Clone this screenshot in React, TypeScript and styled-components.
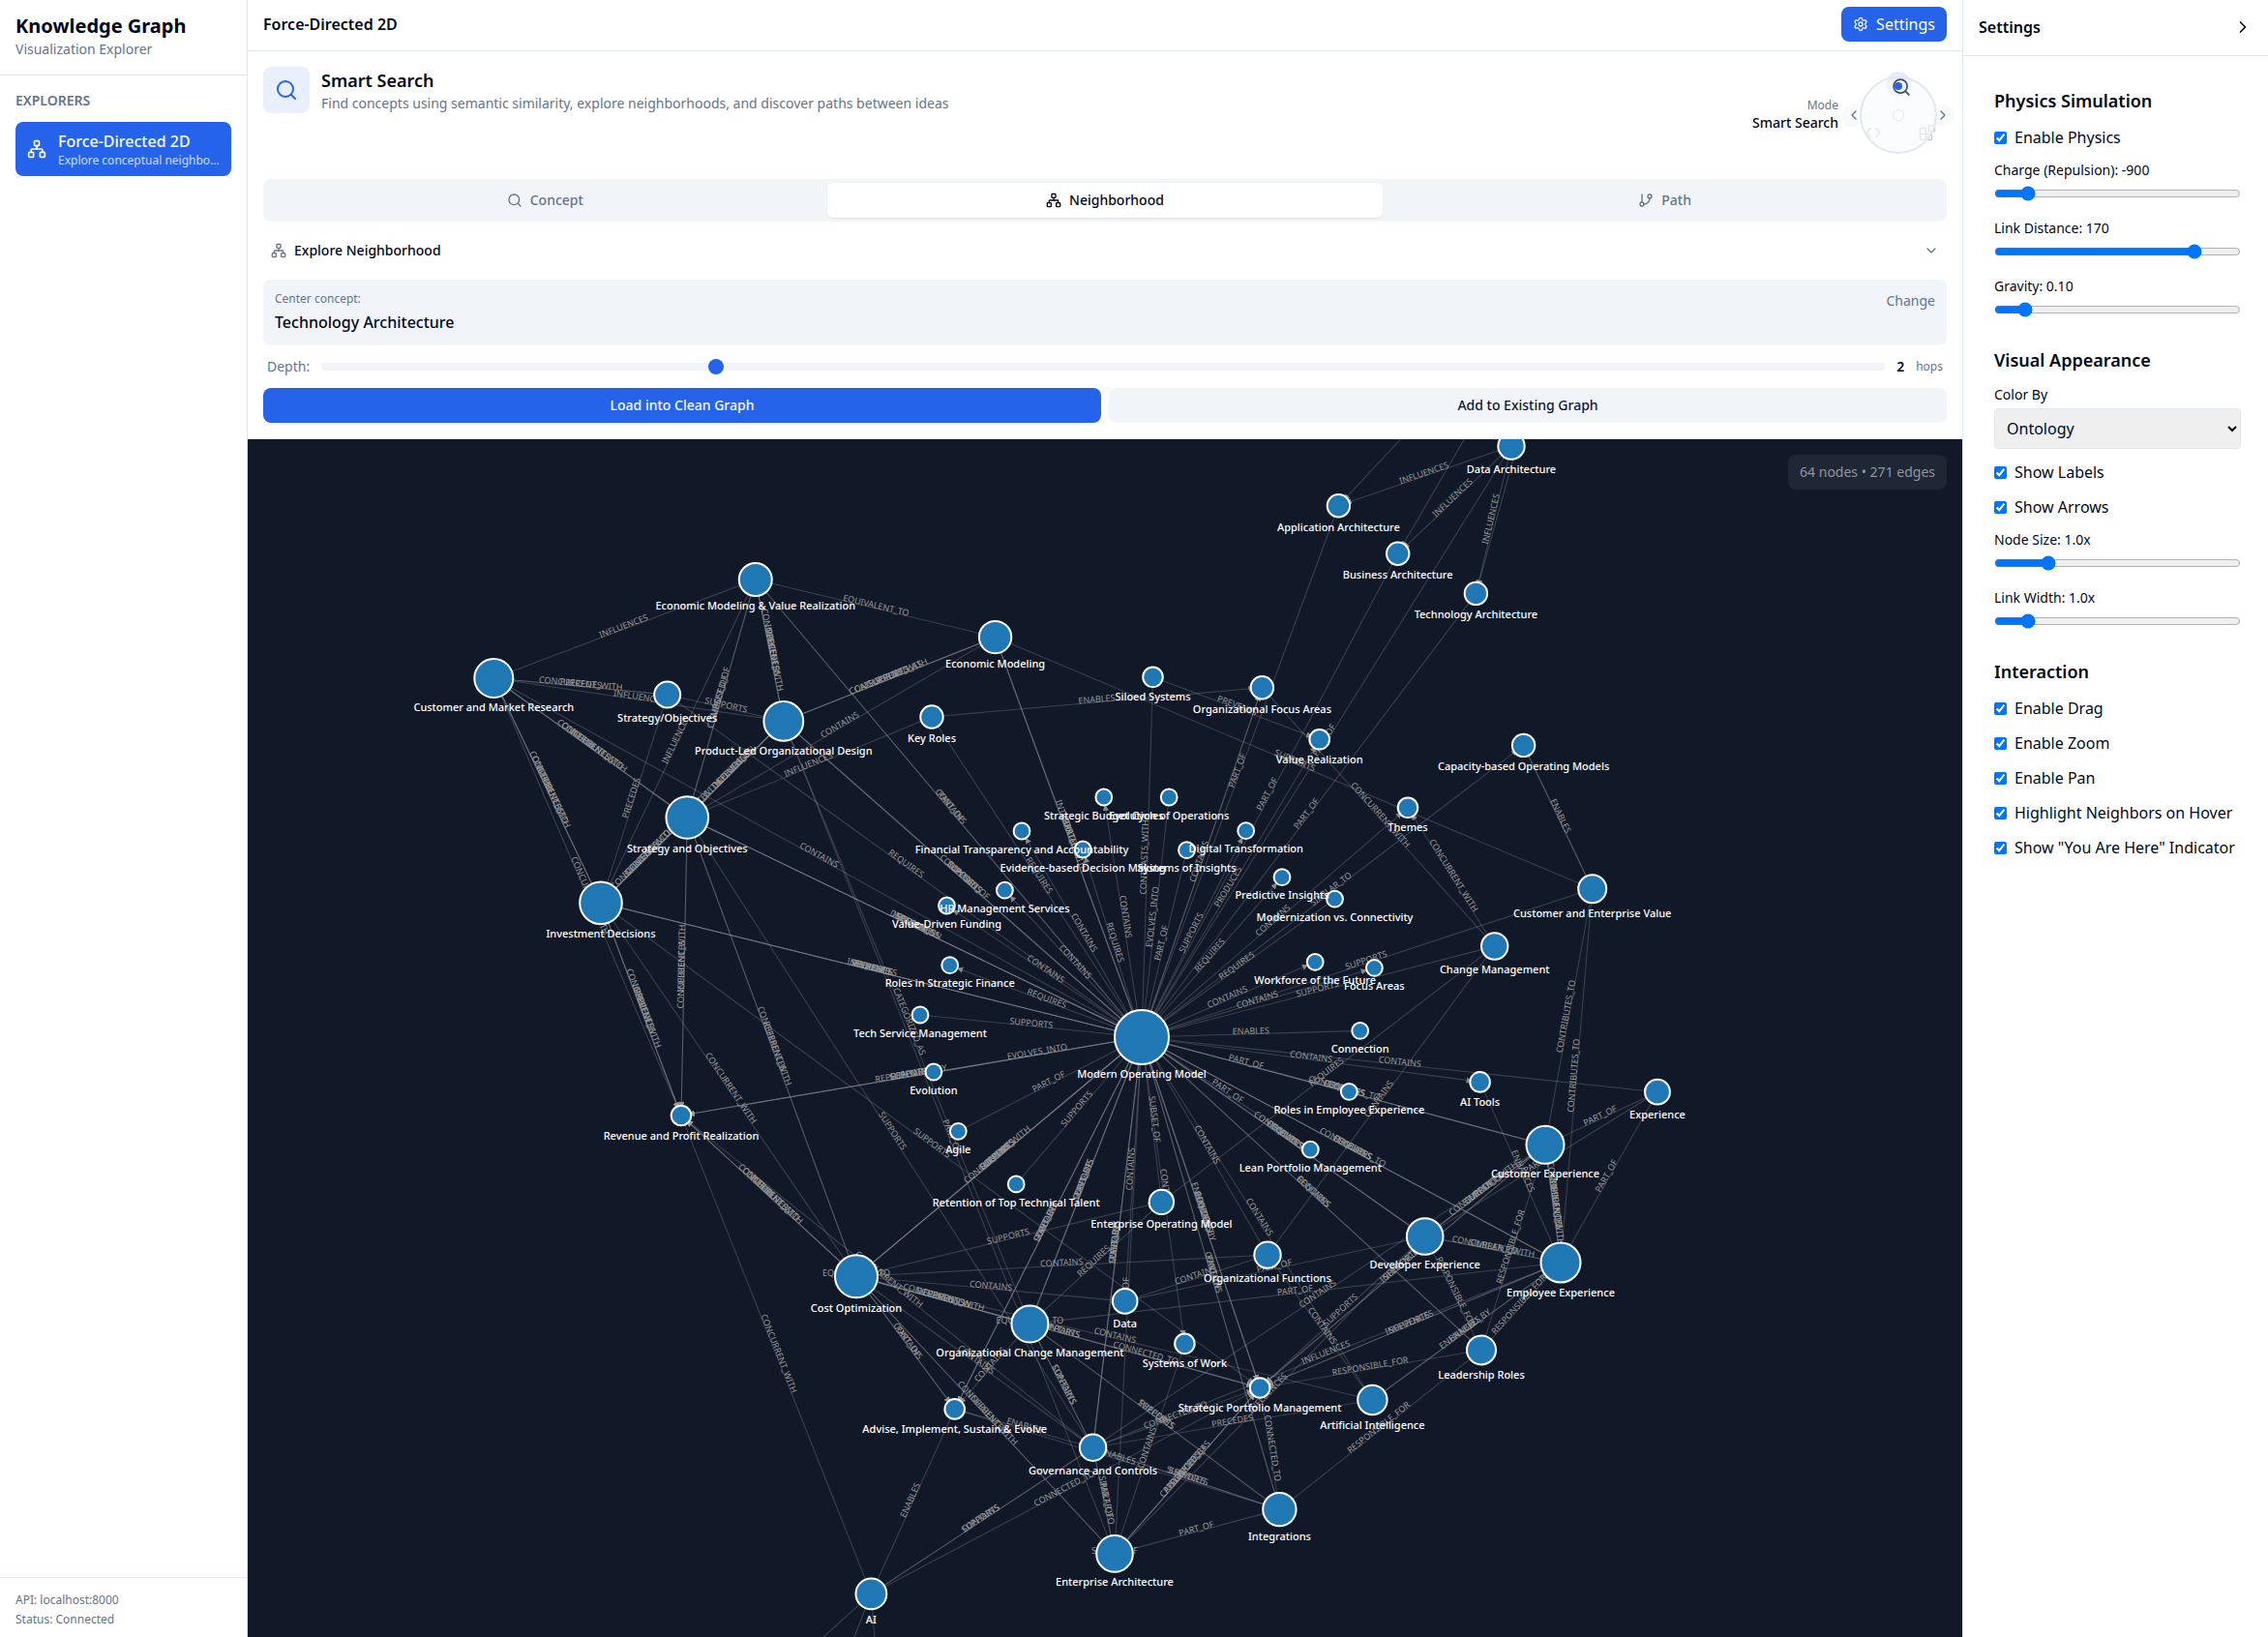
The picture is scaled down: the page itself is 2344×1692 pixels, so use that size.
import React, { useState } from "react";
import styled, { createGlobalStyle, css } from "styled-components";
import {
  Blocks,
  ChevronDown,
  ChevronLeft,
  ChevronRight,
  Code,
  GitBranch,
  Network,
  Search,
  Settings,
} from "lucide-react";

const color = {
  text: "#020817",
  muted: "#64748b",
  border: "#e2e8f0",
  surface: "#f1f5f9",
  primary: "#2563eb",
  onPrimary: "#f8fafc",
  canvas: "#111827",
};

const GlobalStyle = createGlobalStyle`
  *, *::before, *::after { box-sizing: border-box; }
  body {
    margin: 0;
    overflow: hidden;
    background: #fff;
    color: ${color.text};
    font-family: "Noto Sans", sans-serif;
    font-size: 16px;
    line-height: 24px;
  }
  button, select, input { font: inherit; color: inherit; }
  button { border: 0; background: none; padding: 0; cursor: pointer; }
  h1, h2, h3, p { margin: 0; }
  svg { display: block; flex-shrink: 0; }
`;

/* ---------- page frame ---------- */

const Page = styled.div`
  display: grid;
  grid-template-columns: 256px minmax(0, 1fr) 316px;
  height: 100vh;
`;

const Sidebar = styled.aside`
  display: flex;
  flex-direction: column;
  border-right: 1px solid ${color.border};
`;

const Brand = styled.header`
  padding: 16px;
  height: 78px;
  border-bottom: 1px solid ${color.border};
`;

const BrandName = styled.h1`
  font-size: 20px;
  line-height: 25px;
  margin-top: -2px;
  margin-bottom: 2px;
  font-weight: 700;
`;

const Muted = styled.p<{ $small?: boolean }>`
  font-size: ${(p) => (p.$small ? 12 : 14)}px;
  line-height: ${(p) => (p.$small ? 16 : 20)}px;
  color: ${color.muted};
`;

const Explorers = styled.nav`
  flex: 1;
  padding: 16px;
`;

const NavTitle = styled.h2`
  font-size: 14px;
  line-height: 20px;
  font-weight: 600;
  text-transform: uppercase;
  color: ${color.muted};
  margin-bottom: 12px;
`;

const ExplorerItem = styled.button`
  display: flex;
  align-items: center;
  gap: 12px;
  width: 100%;
  padding: 8px 12px;
  border-radius: 8px;
  background: ${color.primary};
  color: ${color.onPrimary};
  text-align: left;
`;

const ExplorerText = styled.span`
  flex: 1;
  min-width: 0;
`;

const ExplorerName = styled.span`
  display: block;
  font-weight: 500;
  line-height: 24px;
`;

const ExplorerHint = styled.span`
  display: block;
  font-size: 12px;
  line-height: 16px;
  opacity: 0.8;
  overflow: hidden;
  text-overflow: ellipsis;
  white-space: nowrap;
`;

const SidebarFooter = styled.footer`
  display: flex;
  flex-direction: column;
  gap: 4px;
  padding: 15px 16px 10px;
  border-top: 1px solid ${color.border};
`;

const Main = styled.main`
  display: flex;
  flex-direction: column;
  min-width: 0;
  min-height: 0;
`;

const TopBar = styled.header`
  display: flex;
  align-items: center;
  justify-content: space-between;
  height: 53px;
  padding: 0 16px 2px;
  border-bottom: 1px solid ${color.border};
`;

const BarTitle = styled.h2`
  font-size: 16px;
  line-height: 24px;
  font-weight: 600;
`;

const SettingsButton = styled.button`
  display: flex;
  align-items: center;
  gap: 8px;
  height: 36px;
  padding: 0 12px;
  border-radius: 8px;
  background: ${color.primary};
  color: ${color.onPrimary};
`;

/* ---------- search area ---------- */

const SearchArea = styled.section`
  display: flex;
  flex-direction: column;
  padding: 16px;
  border-bottom: 1px solid ${color.border};
`;

const SearchHead = styled.div`
  display: flex;
  justify-content: space-between;
  align-items: flex-start;
  height: 100px;
  margin-bottom: 16px;
`;

const Intro = styled.div`
  display: flex;
  gap: 12px;
`;

const IntroIcon = styled.div`
  display: grid;
  place-items: center;
  width: 48px;
  height: 48px;
  border-radius: 8px;
  background: #e9effd;
  color: ${color.primary};
`;

const IntroTitle = styled.h2`
  font-size: 18px;
  line-height: 28px;
  font-weight: 600;
`;

const ModePicker = styled.div`
  display: flex;
  align-items: center;
  gap: 12px;
`;

const ModeText = styled.div`
  text-align: right;
`;

const ModeName = styled.p`
  font-size: 14px;
  line-height: 20px;
  font-weight: 500;
`;

const Dial = styled.div`
  position: relative;
  width: 100px;
  height: 100px;
`;

const DialArrow = styled.button<{ $side: "left" | "right" }>`
  position: absolute;
  top: 38px;
  ${(p) => p.$side}: -8px;
  display: grid;
  place-items: center;
  width: 24px;
  height: 24px;
  border-radius: 50%;
  background: #f8fafc;
  color: ${color.muted};
`;

const DialHalo = styled.span`
  position: absolute;
  left: 37px;
  top: 5px;
  width: 26px;
  height: 26px;
  border-radius: 50%;
  background: #e4ebfd;
`;

const DialFace = styled.span`
  position: absolute;
  left: 10px;
  top: 10px;
  width: 80px;
  height: 80px;
  border: 2px solid ${color.border};
  border-radius: 50%;
  background: rgba(248, 250, 252, 0.6);
`;

const DialIcon = styled.span<{ $x: number; $y: number; $dim?: boolean }>`
  position: absolute;
  left: ${(p) => p.$x}px;
  top: ${(p) => p.$y}px;
  transform: translate(-50%, -50%);
  color: ${(p) => (p.$dim ? "#c6cad1" : "#475060")};
`;

const DialDot = styled.span<{ $hub?: boolean }>`
  position: absolute;
  left: 50px;
  top: ${(p) => (p.$hub ? 50 : 20)}px;
  width: ${(p) => (p.$hub ? 12 : 8)}px;
  height: ${(p) => (p.$hub ? 12 : 8)}px;
  border-radius: 50%;
  transform: translate(-50%, -50%);
  background: ${(p) => (p.$hub ? "#fff" : color.primary)};
  ${(p) => p.$hub && css`border: 1px solid ${color.border};`}
`;

const Tabs = styled.div`
  display: grid;
  grid-template-columns: repeat(3, 1fr);
  gap: 4px;
  padding: 4px;
  border-radius: 8px;
  background: ${color.surface};
`;

const Tab = styled.button<{ $active: boolean }>`
  display: flex;
  align-items: center;
  justify-content: center;
  gap: 8px;
  height: 36px;
  border-radius: 6px;
  font-size: 14px;
  line-height: 20px;
  font-weight: 500;
  color: ${(p) => (p.$active ? color.text : color.muted)};
  ${(p) =>
    p.$active &&
    css`
      background: #fff;
      box-shadow: 0 1px 2px rgba(0, 0, 0, 0.07);
    `}
`;

const Disclosure = styled.button`
  display: flex;
  align-items: center;
  gap: 8px;
  height: 36px;
  margin: 12px 0;
  padding: 0 8px;
  font-size: 14px;
  line-height: 20px;
  font-weight: 500;
  svg { color: ${color.muted}; }
  svg:last-child { margin-left: auto; }
`;

const ConceptCard = styled.div`
  display: flex;
  justify-content: space-between;
  align-items: flex-start;
  padding: 12px;
  border-radius: 8px;
  background: ${color.surface};
`;

const ConceptName = styled.p`
  margin-top: 4px;
  line-height: 24px;
  font-weight: 500;
`;

const LinkButton = styled.button`
  font-size: 14px;
  line-height: 20px;
  color: ${color.muted};
`;

const DepthRow = styled.label`
  display: flex;
  align-items: center;
  gap: 12px;
  height: 20px;
  margin: 12px 0;
  padding: 0 4px;
`;

const DepthValue = styled.span`
  font-size: 14px;
  font-weight: 600;
`;

const DepthSlider = styled.input`
  flex: 1;
  appearance: none;
  height: 8px;
  margin: 0;
  border-radius: 8px;
  background: ${color.surface};
  &::-webkit-slider-thumb {
    appearance: none;
    width: 16px;
    height: 16px;
    border-radius: 50%;
    background: ${color.primary};
  }
`;

const Actions = styled.div`
  display: grid;
  grid-template-columns: 1fr 1fr;
  gap: 8px;
`;

const Action = styled.button<{ $primary?: boolean }>`
  height: 36px;
  border-radius: 8px;
  font-size: 14px;
  font-weight: 500;
  background: ${(p) => (p.$primary ? color.primary : color.surface)};
  color: ${(p) => (p.$primary ? color.onPrimary : "#0f172a")};
`;

/* ---------- graph ---------- */

const Canvas = styled.section`
  position: relative;
  flex: 1;
  min-height: 0;
  overflow: hidden;
  background: ${color.canvas};
`;

const GraphSvg = styled.svg`
  width: 1772px;
  height: 1238px;
  font-family: "Noto Sans", sans-serif;
`;

const Stats = styled.div`
  position: absolute;
  top: 16px;
  right: 16px;
  padding: 8px 12px;
  border-radius: 8px;
  background: #1f2735;
  color: #8f96a3;
  font-size: 14px;
  line-height: 20px;
`;

const EdgeLine = styled.line`
  stroke: #979aa6;
  stroke-opacity: 0.3;
  stroke-width: 1.1;
`;

const EdgeText = styled.text`
  fill: #999;
  font-size: 9px;
  text-anchor: middle;
`;

const NodeDot = styled.circle`
  fill: #1f77b4;
  stroke: #fff;
  stroke-width: 2;
`;

const NodeText = styled.text`
  fill: #fff;
  font-size: 11px;
  font-weight: 500;
  text-anchor: middle;
`;

type GraphNode = { x: number; y: number; r: number; label: string };

/* id: [x, y, outer radius, label] */
const nodeTable: Record<string, [number, number, number, string]> = {
  emvr: [780.8, 599, 18, "Economic Modeling & Value Realization"],
  em: [1028.6, 658.6, 17.7, "Economic Modeling"],
  cmr: [510.3, 701, 21, "Customer and Market Research"],
  sobj: [689.7, 718, 14.5, "Strategy/Objectives"],
  plod: [809.8, 745.4, 21.4, "Product-Led Organizational Design"],
  key: [963, 741, 12.7, "Key Roles"],
  so: [710.3, 845, 22.8, "Strategy and Objectives"],
  inv: [621, 933.3, 22.8, "Investment Decisions"],
  rev: [704, 1153, 11.3, "Revenue and Profit Realization"],
  sbc: [1140.8, 824, 9.4, "Strategic Budget Cycles"],
  eop: [1208.2, 824, 9.4, "Evolution of Operations"],
  fta: [1056, 859, 9.4, "Financial Transparency and Accountability"],
  edm: [1119.2, 878, 9.4, "Evidence-based Decision Making"],
  soi: [1226.5, 878.7, 9.4, "Systems of Insights"],
  dt: [1287.7, 858.7, 9.4, "Digital Transformation"],
  pi: [1325, 906.7, 9.4, "Predictive Insights"],
  mvc: [1379.5, 929.2, 9.4, "Modernization vs. Connectivity"],
  themes: [1455, 834.8, 11.3, "Themes"],
  hr: [1038.4, 920.2, 9.4, "HR Management Services"],
  vdf: [978.5, 936, 9.4, "Value-Driven Funding"],
  rsf: [981.7, 997.7, 9.4, "Roles in Strategic Finance"],
  wof: [1359.2, 994.3, 9.4, "Workforce of the Future"],
  fa: [1420.4, 1000.4, 9.4, "Focus Areas"],
  conn: [1405.7, 1065.4, 9.4, "Connection"],
  tsm: [951, 1049, 9.4, "Tech Service Management"],
  evo: [964.9, 1108, 9.4, "Evolution"],
  agile: [990.3, 1169.3, 9.4, "Agile"],
  ret: [1050.2, 1223.9, 9.4, "Retention of Top Technical Talent"],
  eom: [1200.4, 1242.4, 13.7, "Enterprise Operating Model"],
  mom: [1180, 1072, 29, "Modern Operating Model"],
  ree: [1394.3, 1128.4, 9.4, "Roles in Employee Experience"],
  lean: [1354.3, 1188.2, 9.4, "Lean Portfolio Management"],
  ait: [1529.6, 1118.4, 11.3, "AI Tools"],
  darch: [1562, 461, 14.7, "Data Architecture"],
  aarch: [1383.4, 522.8, 12.7, "Application Architecture"],
  barch: [1444.7, 572.3, 12.7, "Business Architecture"],
  tarch: [1525.4, 613.4, 12.7, "Technology Architecture"],
  silo: [1191.5, 699.8, 11.3, "Siloed Systems"],
  ofa: [1304.4, 710.7, 12.7, "Organizational Focus Areas"],
  vr: [1363.7, 764.3, 11.3, "Value Realization"],
  cap: [1574.6, 770.4, 12.7, "Capacity-based Operating Models"],
  cev: [1645.7, 918.8, 15.5, "Customer and Enterprise Value"],
  chg: [1544.7, 978, 14.7, "Change Management"],
  exp: [1713, 1128.7, 13.9, "Experience"],
  cx: [1597, 1183.3, 20.5, "Customer Experience"],
  dx: [1472.7, 1278, 19.8, "Developer Experience"],
  ex: [1613, 1305, 21.5, "Employee Experience"],
  lead: [1531, 1395.4, 16, "Leadership Roles"],
  of: [1310, 1297.1, 14.7, "Organizational Functions"],
  cost: [885, 1319.3, 23, "Cost Optimization"],
  ocm: [1064.4, 1368.4, 20, "Organizational Change Management"],
  data: [1162.7, 1344.9, 13.8, "Data"],
  sow: [1224.4, 1388.8, 11.3, "Systems of Work"],
  spm: [1302.1, 1434.5, 11.3, "Strategic Portfolio Management"],
  adv: [986.7, 1456.4, 11.3, "Advise, Implement, Sustain & Evolve"],
  gov: [1129.6, 1496.2, 14.7, "Governance and Controls"],
  ea: [1152, 1605.9, 19.8, "Enterprise Architecture"],
  ai: [900.4, 1647.4, 16.9, "AI"],
  int: [1322.4, 1560.1, 18.2, "Integrations"],
  art: [1418.4, 1447, 16.2, "Artificial Intelligence"],
  offTop: [1621.8, 266.8, 14, ""],
  offA: [794, 1743.5, 12, ""],
  offB: [862, 1745, 12, ""],
  offC: [908, 1745, 12, ""],
};

const nodes: Record<string, GraphNode> = Object.fromEntries(
  Object.entries(nodeTable).map(([id, [x, y, r, label]]) => [id, { x, y, r, label }])
);

/* source target relation,relation,… */
const edgeTable = `
mom sbc CONTAINS
mom edm REQUIRES
mom fta CONTAINS
mom hr CONTAINS
mom vdf CONTAINS
mom rsf REQUIRES
tsm mom SUPPORTS
evo mom EVOLVES_INTO
agile mom PART_OF
ret mom SUPPORTS
eop mom EVOLVES_INTO
soi mom PART_OF
mom dt SUPPORTS
mom pi REQUIRES
mvc mom REQUIRES
mom themes CONTAINS
mom cap SIMILAR_TO
mom vr PRODUCES
tarch mom PART_OF
barch mom PART_OF
aarch mom PART_OF
darch mom PART_OF
mom ofa CONTAINS
silo mom CONTRASTS_WITH
mom ofa
em mom INTEGRATES_WITH,CONTAINS,PART_OF
emvr mom CONTAINS,PART_OF
plod mom COMPOSED_OF,CONTAINS,SUPPORTS
sobj mom REQUIRES
cmr mom CONTAINS
so mom INFLUENCES,SUPPORTS,REQUIRES,DEPENDS_ON
inv mom INFLUENCES,SUPPORTS,REQUIRES,ENABLES
mom rev REPRESENTED_BY,SUPPORTS,CONTAINS
key mom REQUIRES
cost mom CONCURRENT_WITH,CONTAINS,SUPPORTS,REQUIRES
ocm mom SUPPORTS,PART_OF,CONTAINS
mom adv SUPPORTS,CONTAINS,PART_OF
gov mom SUPPORTS,PART_OF,CONTAINS
ea mom PART_OF
mom data CONTAINS
eom mom SUBSET_OF
mom sow CONTAINS
mom spm ENHANCED_BY,CONTAINS,REQUIRES
int mom CONTAINS,PART_OF
mom of CONTAINS
mom art CONTAINS
mom lead REQUIRES,CONTAINS
dx mom CONTRIBUTES_TO,CONTAINS,REQUIRES
lean mom PART_OF
ex mom CONTRIBUTES_TO,CONTAINS,REQUIRES
cx mom CONTRIBUTES_TO,CONTAINS,REQUIRES
ree mom PART_OF
mom ait CONTAINS
mom exp CONTAINS
conn mom ENABLES
mom fa CONTAINS
mom wof CONTAINS
chg mom SUPPORTS
cev mom SUPPORTS
emvr cmr INFLUENCES
emvr em EQUIVALENT_TO
emvr plod CONCURRENT_WITH,PRECEDES,INFLUENCES
emvr so COMPOSED_OF,SUBSET_OF
emvr inv INFLUENCES
em plod CONCURRENT_WITH,CATEGORIZED_AS,SUPPORTS
em so CONTAINS
em cev SUPPORTS
silo vr PREVENTS
key ofa ENABLES
ofa chg CONCURRENT_WITH
chg themes CONCURRENT_WITH
cap cev ENABLES,
cmr plod INFLUENCES
cmr sobj CONCURRENT_WITH,PRECEDES
sobj plod SUPPORTS
sobj inv PRECEDES
cmr so CONCURRENT_WITH,INFLUENCES,CONTRIBUTES_TO
cmr inv CONCURRENT_WITH,CONTRIBUTES_TO,INFLUENCES
cmr rev CONCURRENT_WITH
plod so INFLUENCES,DEPENDS_ON,CONTAINS
plod inv CONCURRENT_WITH,INFLUENCES
so inv CONCURRENT_WITH,INFLUENCES,CONTAINS
key so INFLUENCES
so rev CONCURRENT_WITH,INFLUENCES
inv rev CONCURRENT_WITH,INFLUENCES,PRECEDES
so cost CONCURRENT_WITH,REFERENCES
inv cost CONCURRENT_WITH
inv spm SUPPORTS
so gov SUPPORTS
plod ocm CATEGORIZED_AS
plod ea PART_OF
cost rev CONCURRENT_WITH,CONTRIBUTES_TO,INFLUENCES
rev ai CONCURRENT_WITH
gov rev CONCURRENT_WITH
cost eom SUPPORTS
cost of CONTAINS
cost data CONTAINS
cost ocm CONCURRENT_WITH,CONTAINS,DEPENDS_ON
cost spm CONTAINS,SUPPORTS
eom ocm REQUIRES
cost adv CONTAINS,PART_OF
cost gov CONTAINS
cost ea CONCURRENT_WITH,INFLUENCES
ocm adv CONTAINS
ocm gov CONTAINS,SUPPORTS
ocm spm CONNECTED_TO
cost art CONTAINS
ocm int PRECEDES,SUPPORTS
ocm ex PART_OF
data of CONTAINS
data dx PART_OF
sow ea CONTAINS
gov spm CONNECTED_TO
gov art PRECEDES
ai spm CONNECTED_TO
ea spm CATEGORIZED_AS,SUPPORTS,PRODUCED_BY
spm int CONNECTED_TO
gov int SERVICES,SUPPORTS
adv gov ENABLES
adv int ENABLES
adv ai ENABLES
gov ea SIMILAR_TO,PART_OF
gov ai CONTAINS,SUPPORTS
ea int PART_OF
gov cx CONTAINS
dx spm SUPPORTS
ea dx INFLUENCES
cx spm INFLUENCES,SUPPORTS
ex spm INFLUENCES,SUPPORTS
gov ex INFLUENCES
lead spm RESPONSIBLE_FOR
lead int RESPONSIBLE_FOR
art ex ENHANCED_BY,ENABLES
lead ex RESPONSIBLE_FOR
lead dx RESPONSIBLE_FOR
lead cx RESPONSIBLE_FOR
cx dx CONCURRENT_WITH,SIMILAR_TO,SUPPORTS
cx ex CONCURRENT_WITH,SIMILAR_TO,INFLUENCES
dx ex CONCURRENT_WITH,SIMILAR_TO
exp cx PART_OF
exp ex PART_OF
exp dx PART_OF
ait ex ENHANCES
cev cx CONTRIBUTES_TO
cev ex CONTRIBUTES_TO
chg eom REQUIRES
chg of CONTAINS
of art CONTAINS
darch aarch INFLUENCES
darch barch INFLUENCES
darch tarch INFLUENCES
offTop aarch
offTop barch
offTop tarch
ai offA
ai offB
ai offC
cost cost EQUIVALENT_TO
ocm ocm EQUIVALENT_TO
ea ea SUBSET_OF
`;

type Edge = { key: string; a: GraphNode; b: GraphNode; label: string };

const edges: Edge[] = edgeTable
  .trim()
  .split("\n")
  .flatMap((row) => {
    const [from, to, relations = ""] = row.split(" ");
    return relations
      .split(",")
      .map((label, i) => ({ key: `${from}-${to}-${label}-${i}`, a: nodes[from], b: nodes[to], label }));
  });

const labelTransform = ({ a, b }: Edge) => {
  let angle = (Math.atan2(b.y - a.y, b.x - a.x) * 180) / Math.PI;
  if (angle > 90 || angle < -90) angle += 180;
  return `translate(${(a.x + b.x) / 2} ${(a.y + b.y) / 2}) rotate(${angle})`;
};

function Graph() {
  const shown = Object.values(nodes);
  return (
    <GraphSvg viewBox="256 454 1772 1238" aria-label="Concept graph">
      <defs>
        <marker
          id="arrow"
          viewBox="0 -5 10 10"
          refX="22"
          markerWidth="6.4"
          markerHeight="6.4"
          markerUnits="userSpaceOnUse"
          orient="auto"
        >
          <path d="M0,-5L10,0L0,5" fill="#999" fillOpacity="0.85" />
        </marker>
      </defs>
      {edges.map((e) => (
        <EdgeLine key={e.key} x1={e.a.x} y1={e.a.y} x2={e.b.x} y2={e.b.y} markerEnd="url(#arrow)" />
      ))}
      {edges.map(
        (e) =>
          e.label && (
            <EdgeText key={e.key} transform={labelTransform(e)}>
              {e.label}
            </EdgeText>
          )
      )}
      {shown.map((n, i) => (
        <NodeDot key={i} cx={n.x} cy={n.y} r={n.r - 1} />
      ))}
      {shown.map((n, i) => (
        <NodeText key={i} x={n.x} y={n.y + n.r + 13.3}>
          {n.label}
        </NodeText>
      ))}
    </GraphSvg>
  );
}

/* ---------- settings panel ---------- */

const Panel = styled.aside`
  border-left: 1px solid ${color.border};
`;

const PanelHeader = styled.header`
  display: flex;
  align-items: center;
  justify-content: space-between;
  height: 58px;
  padding: 0 16px 2px;
  border-bottom: 1px solid ${color.border};
`;

const PanelBody = styled.div`
  display: flex;
  flex-direction: column;
  gap: 24px;
  padding: 32px 28px 0 32px;
`;

const Group = styled.section`
  display: flex;
  flex-direction: column;
  gap: 12px;
`;

const GroupTitle = styled.h3`
  font-size: 18px;
  line-height: 28px;
  font-weight: 600;
`;

const CheckRow = styled.label`
  display: flex;
  align-items: center;
  gap: 8px;
  line-height: 24px;
  white-space: nowrap;
  input { margin: 0; width: 13px; height: 13px; }
`;

const Field = styled.label`
  display: flex;
  flex-direction: column;
  font-size: 14px;
  line-height: 20px;
`;

const Range = styled.input`
  width: 100%;
  height: 16px;
  margin: 6px 0;
`;

const Select = styled.select`
  height: 42px;
  margin-top: 4px;
  padding: 8px;
  border: 1px solid ${color.border};
  border-radius: 4px;
  font-size: 16px;
  line-height: 24px;
`;

function Check({ label }: { label: string }) {
  const [on, setOn] = useState(true);
  return (
    <CheckRow>
      <input type="checkbox" checked={on} onChange={() => setOn(!on)} />
      {label}
    </CheckRow>
  );
}

type SliderProps = {
  label: string;
  min: number;
  max: number;
  step: number;
  initial: number;
  format?: (v: number) => string;
};

function Slider({ label, min, max, step, initial, format = String }: SliderProps) {
  const [value, setValue] = useState(initial);
  return (
    <Field style={{ height: 48 }}>
      {`${label}: ${format(value)}`}
      <Range
        type="range"
        min={min}
        max={max}
        step={step}
        value={value}
        onChange={(e) => setValue(Number(e.target.value))}
      />
    </Field>
  );
}

const times = (v: number) => `${v.toFixed(1)}x`;

function SettingsPanel() {
  return (
    <Panel>
      <PanelHeader>
        <BarTitle>Settings</BarTitle>
        <ChevronRight size={20} />
      </PanelHeader>
      <PanelBody>
        <Group>
          <GroupTitle>Physics Simulation</GroupTitle>
          <Check label="Enable Physics" />
          <Slider label="Charge (Repulsion)" min={-1000} max={-100} step={10} initial={-900} />
          <Slider label="Link Distance" min={20} max={200} step={10} initial={170} />
          <Slider label="Gravity" min={0} max={1} step={0.05} initial={0.1} format={(v) => v.toFixed(2)} />
        </Group>
        <Group>
          <GroupTitle>Visual Appearance</GroupTitle>
          <Field>
            Color By
            <Select defaultValue="Ontology">
              <option>Ontology</option>
            </Select>
          </Field>
          <Check label="Show Labels" />
          <Check label="Show Arrows" />
          <Slider label="Node Size" min={0.5} max={3} step={0.1} initial={1} format={times} />
          <Slider label="Link Width" min={0.5} max={5} step={0.1} initial={1} format={times} />
        </Group>
        <Group>
          <GroupTitle>Interaction</GroupTitle>
          <Check label="Enable Drag" />
          <Check label="Enable Zoom" />
          <Check label="Enable Pan" />
          <Check label="Highlight Neighbors on Hover" />
          <Check label={'Show "You Are Here" Indicator'} />
        </Group>
      </PanelBody>
    </Panel>
  );
}

/* ---------- search controls ---------- */

function ModeDial() {
  return (
    <Dial>
      <DialArrow $side="left" aria-label="Previous mode">
        <ChevronLeft size={16} />
      </DialArrow>
      <DialArrow $side="right" aria-label="Next mode">
        <ChevronRight size={16} />
      </DialArrow>
      <DialHalo />
      <DialIcon $x={24} $y={68} $dim>
        <Code size={17} />
      </DialIcon>
      <DialIcon $x={80} $y={67.5} $dim>
        <Blocks size={18} />
      </DialIcon>
      <DialFace />
      <DialIcon $x={52.5} $y={20.5}>
        <Search size={21} />
      </DialIcon>
      <DialDot />
      <DialDot $hub />
    </Dial>
  );
}

const tabs = [
  { name: "Concept", Icon: Search },
  { name: "Neighborhood", Icon: Network },
  { name: "Path", Icon: GitBranch },
];

function SearchControls() {
  const [tab, setTab] = useState("Neighborhood");
  const [depth, setDepth] = useState(2);
  return (
    <SearchArea>
      <SearchHead>
        <Intro>
          <IntroIcon>
            <Search size={24} />
          </IntroIcon>
          <div>
            <IntroTitle>Smart Search</IntroTitle>
            <Muted>Find concepts using semantic similarity, explore neighborhoods, and discover paths between ideas</Muted>
          </div>
        </Intro>
        <ModePicker>
          <ModeText>
            <Muted $small>Mode</Muted>
            <ModeName>Smart Search</ModeName>
          </ModeText>
          <ModeDial />
        </ModePicker>
      </SearchHead>
      <Tabs>
        {tabs.map(({ name, Icon }) => (
          <Tab key={name} $active={name === tab} onClick={() => setTab(name)}>
            <Icon size={16} />
            {name}
          </Tab>
        ))}
      </Tabs>
      <Disclosure>
        <Network size={16} />
        Explore Neighborhood
        <ChevronDown size={16} />
      </Disclosure>
      <ConceptCard>
        <div>
          <Muted $small>Center concept:</Muted>
          <ConceptName>Technology Architecture</ConceptName>
        </div>
        <LinkButton>Change</LinkButton>
      </ConceptCard>
      <DepthRow>
        <Muted as="span">Depth:</Muted>
        <DepthSlider
          type="range"
          min={1}
          max={5}
          value={depth}
          onChange={(e) => setDepth(Number(e.target.value))}
        />
        <DepthValue>{depth}</DepthValue>
        <Muted as="span" $small>
          hops
        </Muted>
      </DepthRow>
      <Actions>
        <Action $primary>Load into Clean Graph</Action>
        <Action>Add to Existing Graph</Action>
      </Actions>
    </SearchArea>
  );
}

export default function App() {
  return (
    <>
      <GlobalStyle />
      <Page>
        <Sidebar>
          <Brand>
            <BrandName>Knowledge Graph</BrandName>
            <Muted>Visualization Explorer</Muted>
          </Brand>
          <Explorers>
            <NavTitle>Explorers</NavTitle>
            <ExplorerItem>
              <Network size={20} />
              <ExplorerText>
                <ExplorerName>Force-Directed 2D</ExplorerName>
                <ExplorerHint>Explore conceptual neighborhoods</ExplorerHint>
              </ExplorerText>
            </ExplorerItem>
          </Explorers>
          <SidebarFooter>
            <Muted $small>API: localhost:8000</Muted>
            <Muted $small>Status: Connected</Muted>
          </SidebarFooter>
        </Sidebar>
        <Main>
          <TopBar>
            <BarTitle>Force-Directed 2D</BarTitle>
            <SettingsButton>
              <Settings size={16} />
              Settings
            </SettingsButton>
          </TopBar>
          <SearchControls />
          <Canvas>
            <Graph />
            <Stats>64 nodes • 271 edges</Stats>
          </Canvas>
        </Main>
        <SettingsPanel />
      </Page>
    </>
  );
}
